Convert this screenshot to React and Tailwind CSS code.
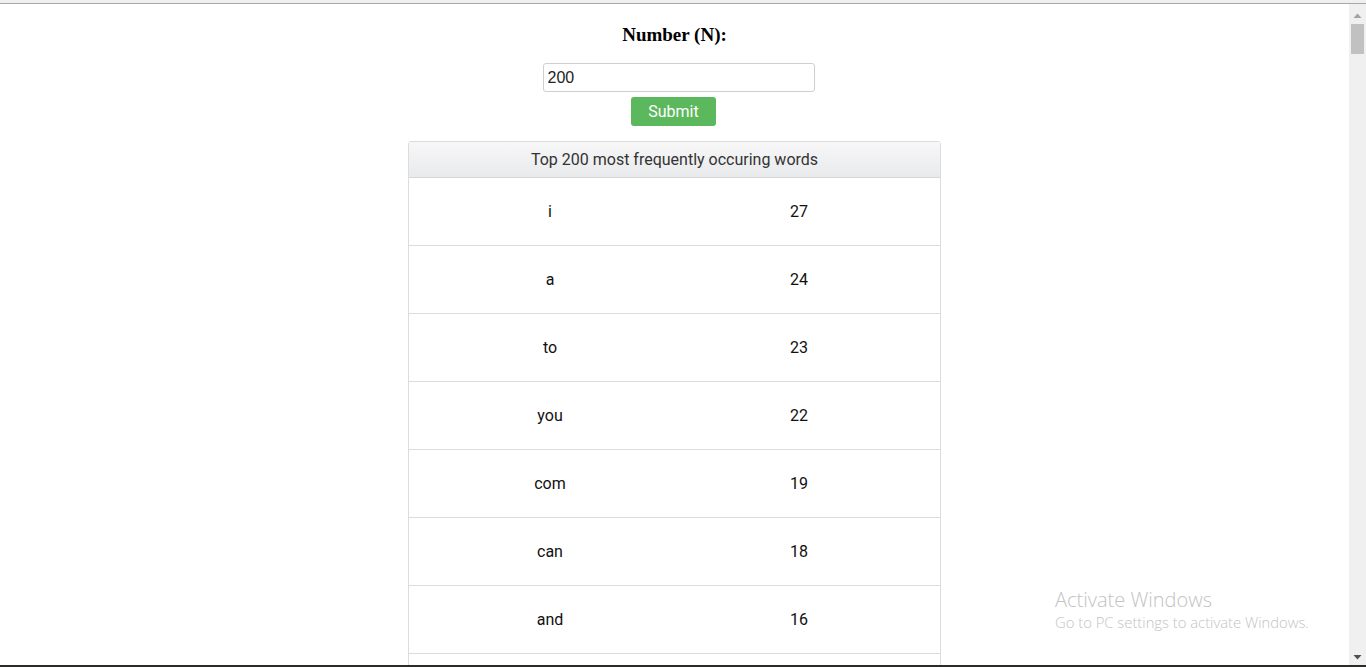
import React, { useState } from 'react';

const words = [
  ['i', 27],
  ['a', 24],
  ['to', 23],
  ['you', 22],
  ['com', 19],
  ['can', 18],
  ['and', 16],
  ['the', 15],
];

export default function App() {
  const [n, setN] = useState('200');

  return (
    <div className="relative h-[667px] overflow-hidden bg-white flex flex-col">
      {/* browser chrome edge */}
      <div className="h-[3px] bg-[#f0f0f0] border-b border-[#a8a8a8] box-content" />
      <div className="flex flex-1 min-h-0">
        <div className="flex-1 min-w-0 overflow-hidden">
          <div className="flex flex-col items-center">
            <h3 className="mt-[17px] text-[19px] font-bold text-black leading-[28px]" style={{ fontFamily: '"Liberation Serif", serif' }}>
              Number (N):
            </h3>
            <input
              value={n}
              onChange={e => setN(e.target.value)}
              className="mt-[14px] ml-[8px] w-[272px] h-[29px] border border-[#cfcfcf] rounded-[3px] px-[4px] text-[16px] text-[#222] outline-none"
              style={{ fontFamily: '"Liberation Sans", Arial, sans-serif' }}
            />
            <button
              className="mt-[5px] mr-[2px] w-[85px] h-[29px] bg-[#5cb85c] rounded-[3px] text-white text-[16px]"
              style={{ fontFamily: 'Roboto, "Liberation Sans", sans-serif' }}
            >
              Submit
            </button>

            <div className="mt-[15px] w-[533px] border border-[#dcdcdc] rounded-t-[3px]" style={{ fontFamily: 'Roboto, "Liberation Sans", sans-serif' }}>
              <div className="h-[36px] flex items-center justify-center bg-gradient-to-b from-[#f7f7f8] to-[#e9eaec] border-b border-[#d6d6d6] text-[16px] text-[#333]">
                Top {n} most frequently occuring words
              </div>
              {words.map(([w, c]) => (
                <div key={w} className="grid grid-cols-[282px_216px] h-[68px] border-b border-[#dcdcdc] items-center text-[16px] text-[#111]">
                  <div className="text-center">{w}</div>
                  <div className="text-center">{c}</div>
                </div>
              ))}
            </div>
          </div>
        </div>

        {/* scrollbar */}
        <div className="w-[17px] bg-[#f0f0f0] flex flex-col items-center">
          <svg width="9" height="6" viewBox="0 0 9 6" className="mt-[9px]">
            <path d="M4.5 0.5 L8.5 5 L0.5 5 Z" fill="#a3a3a3" />
          </svg>
          <div className="mt-[5px] w-[13px] h-[30px] bg-[#c1c1c1]" />
          <div className="flex-1" />
          <svg width="9" height="6" viewBox="0 0 9 6" className="mb-[5px]">
            <path d="M0.5 1 L8.5 1 L4.5 5.5 Z" fill="#505050" />
          </svg>
        </div>
      </div>
      {/* taskbar edge */}
      <div className="h-[2px] bg-[#2b2b28]" />

      {/* watermark overlay */}
      <div className="absolute left-[1055px] top-[588px] text-[#c3c3c3] pointer-events-none" style={{ fontFamily: '"Open Sans", "Noto Sans", sans-serif' }}>
        <div className="text-[20px] font-light leading-[24px]">Activate Windows</div>
        <div className="text-[14.8px] font-light leading-[21px]">Go to PC settings to activate Windows.</div>
      </div>
    </div>
  );
}
